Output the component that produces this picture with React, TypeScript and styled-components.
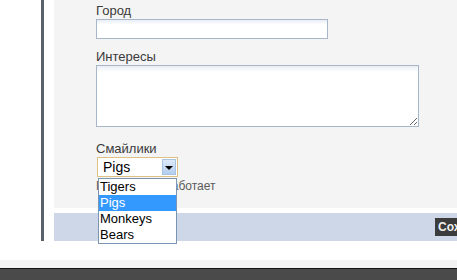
import React from "react";
import styled, { createGlobalStyle } from "styled-components";

const GlobalStyle = createGlobalStyle`
  html, body {
    margin: 0;
    padding: 0;
    background: #ffffff;
    overflow: hidden;
  }
  body {
    font-family: "Liberation Sans", Arial, sans-serif;
  }
`;

const Page = styled.div`
  width: 457px;
  height: 280px;
  overflow: hidden;
`;

const Layout = styled.div`
  display: flex;
  gap: 10px;
  padding-left: 41px;
`;

const Rail = styled.div`
  width: 3px;
  height: 241px;
  background: #5a6169;
  flex-shrink: 0;
`;

const Main = styled.div`
  width: 463px;
  flex-shrink: 0;
  display: flex;
  flex-direction: column;
  gap: 5px;
`;

const FormPanel = styled.div`
  height: 208px;
  background: #f4f4f4;
  padding: 3px 0 0 42px;
  box-sizing: border-box;
`;

const Label = styled.label<{ $top?: number }>`
  display: block;
  font-size: 13px;
  line-height: 15px;
  color: #3a3a3a;
  margin-top: ${(p) => p.$top ?? 0}px;
  margin-bottom: 1px;
`;

const TextInput = styled.input`
  display: block;
  box-sizing: border-box;
  width: 232px;
  height: 20px;
  margin: 0;
  border: 1px solid #a7b6c9;
  background: linear-gradient(#eaeef5 0, #ffffff 5px);
  outline: none;
  font: 13px "Liberation Sans", Arial, sans-serif;
`;

const TextArea = styled.textarea`
  display: block;
  box-sizing: border-box;
  width: 323px;
  height: 62px;
  margin: 0;
  border: 1px solid #a7b6c9;
  background: linear-gradient(#eaeef5 0, #ffffff 6px);
  outline: none;
  resize: both;
  font: 13px "Liberation Sans", Arial, sans-serif;
`;

const Combo = styled.div`
  position: relative;
  width: 81px;
  margin-left: 1px;
`;

const ComboBox = styled.div`
  box-sizing: border-box;
  height: 20px;
  border: 1px solid #e0c184;
  background: #ffffff;
  display: flex;
  align-items: stretch;
`;

const ComboValue = styled.span`
  flex: 1;
  font-size: 14px;
  line-height: 18px;
  padding-left: 5px;
  color: #000;
`;

const ComboArrow = styled.span`
  width: 14px;
  margin: 1px 1px 1px 0;
  box-sizing: border-box;
  border: 1px solid #a9c3e3;
  background: linear-gradient(#dde9f8, #b3cdee);
  display: flex;
  align-items: center;
  justify-content: center;
`;

const Triangle = styled.span`
  width: 0;
  height: 0;
  border-left: 4px solid transparent;
  border-right: 4px solid transparent;
  border-top: 4px solid #000;
  margin-top: 1px;
`;

const OptionList = styled.ul`
  position: absolute;
  top: 21px;
  left: 1px;
  width: 79px;
  margin: 0;
  padding: 0;
  list-style: none;
  box-sizing: border-box;
  border: 1px solid #7b95b3;
  background: #ffffff;
  z-index: 2;
`;

const Option = styled.li<{ $selected?: boolean }>`
  height: 16px;
  font-size: 13px;
  line-height: 16px;
  padding-left: 1px;
  color: ${(p) => (p.$selected ? "#ffffff" : "#000000")};
  background: ${(p) => (p.$selected ? "#3399ff" : "transparent")};
`;

const Hint = styled.div`
  margin-top: 2px;
  font-size: 12px;
  line-height: 14px;
  color: #5a5a5a;
`;

const ActionBar = styled.div`
  height: 28px;
  background: #cdd7e7;
  display: flex;
  align-items: center;
  justify-content: flex-end;
  padding-right: 6px;
`;

const SaveButton = styled.button`
  width: 76px;
  height: 18px;
  border: 0;
  margin: 0;
  padding: 0 0 0 3px;
  background: #3c3c3c;
  color: #f0f0f0;
  font: bold 12px "Liberation Sans", Arial, sans-serif;
  text-align: left;
  white-space: nowrap;
  overflow: hidden;
`;

const Footer = styled.div`
  margin-top: 19px;
`;

const FooterShade = styled.div`
  height: 8px;
  background: #f2f2f2;
`;

const FooterBar = styled.div`
  height: 20px;
  border-top: 1px solid #111111;
  background: #4a4a4a;
`;

const options = ["Tigers", "Pigs", "Monkeys", "Bears"];

export default function App() {
  const selected = "Pigs";
  return (
    <Page>
      <GlobalStyle />
      <Layout>
        <Rail />
        <Main>
          <FormPanel>
            <Label>Город</Label>
            <TextInput type="text" />
            <Label $top={10}>Интересы</Label>
            <TextArea />
            <Label $top={14}>Смайлики</Label>
            <Combo>
              <ComboBox>
                <ComboValue>{selected}</ComboValue>
                <ComboArrow>
                  <Triangle />
                </ComboArrow>
              </ComboBox>
              <OptionList>
                {options.map((o) => (
                  <Option key={o} $selected={o === selected}>
                    {o}
                  </Option>
                ))}
              </OptionList>
            </Combo>
            <Hint>Пока что не работает</Hint>
          </FormPanel>
          <ActionBar>
            <SaveButton>Сохранить</SaveButton>
          </ActionBar>
        </Main>
      </Layout>
      <Footer>
        <FooterShade />
        <FooterBar />
      </Footer>
    </Page>
  );
}
